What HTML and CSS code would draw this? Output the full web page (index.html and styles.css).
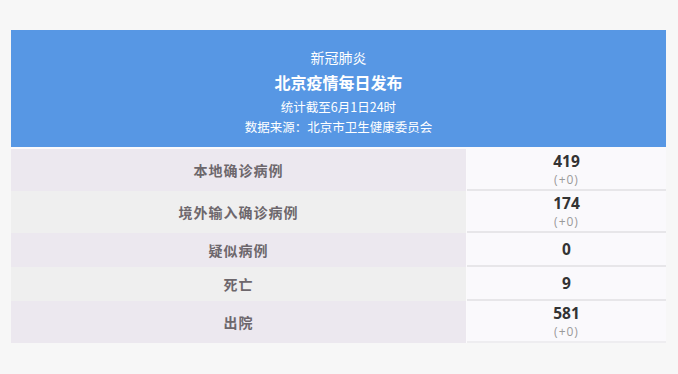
FILE: index.html
```html
<!DOCTYPE html>
<html lang="zh-CN">
<head>
<meta charset="utf-8">
<title>北京疫情每日发布</title>
<link rel="stylesheet" href="styles.css">
</head>
<body>
<div class="card">
  <header class="head">
    <div class="kicker">新冠肺炎</div>
    <div class="title">北京疫情每日发布</div>
    <div class="meta">统计截至6月1日24时</div>
    <div class="meta">数据来源：北京市卫生健康委员会</div>
  </header>
  <div class="table">
    <div class="row tall alt">
      <div class="label">本地确诊病例</div>
      <div class="value"><span class="num">419</span><span class="delta">(+0)</span></div>
    </div>
    <div class="row tall">
      <div class="label">境外输入确诊病例</div>
      <div class="value"><span class="num">174</span><span class="delta">(+0)</span></div>
    </div>
    <div class="row alt">
      <div class="label">疑似病例</div>
      <div class="value"><span class="num">0</span></div>
    </div>
    <div class="row">
      <div class="label">死亡</div>
      <div class="value"><span class="num">9</span></div>
    </div>
    <div class="row tall alt">
      <div class="label">出院</div>
      <div class="value last"><span class="num">581</span><span class="delta">(+0)</span></div>
    </div>
  </div>
</div>
</body>
</html>
```

FILE: styles.css
```css
html, body {
  margin: 0;
  padding: 0;
  background: #f7f7f7;
}
body {
  font-family: "Noto Sans CJK SC", "Open Sans", sans-serif;
}
.card {
  width: 655px;
  margin: 30px 0 0 11px;
  background: #fbfafc;
}
.head {
  background: #5797e4;
  color: #ffffff;
  text-align: center;
  padding: 17px 0 10px;
}
.kicker {
  font-size: 14px;
  line-height: 20px;
}
.title {
  font-size: 16px;
  font-weight: 700;
  line-height: 30px;
}
.meta {
  font-size: 12.5px;
  line-height: 20px;
}
.table {
  margin-top: 2px;
  display: flex;
  flex-direction: column;
}
.row {
  display: grid;
  grid-template-columns: 455px 1fr;
  height: 34px;
}
.row.tall {
  height: 42px;
}
.label {
  background: #efefef;
  color: #6d676c;
  font-size: 14px;
  font-weight: 700;
  letter-spacing: 1px;
  display: flex;
  align-items: center;
  justify-content: center;
}
.row.alt .label {
  background: #ece8ef;
}
.value {
  margin-left: 1px;
  background: #faf9fc;
  border-bottom: 2px solid #e7e6e9;
  display: flex;
  flex-direction: column;
  align-items: center;
  justify-content: center;
}
.value.last {
  border-bottom-color: #eeedf0;
}
.num {
  font-family: "Open Sans", sans-serif;
  font-weight: 700;
  font-size: 15.5px;
  line-height: 20px;
  color: #333333;
}
.delta {
  font-family: "Open Sans", sans-serif;
  font-size: 12px;
  line-height: 17px;
  color: #9a9a9a;
  letter-spacing: 1px;
}
```
